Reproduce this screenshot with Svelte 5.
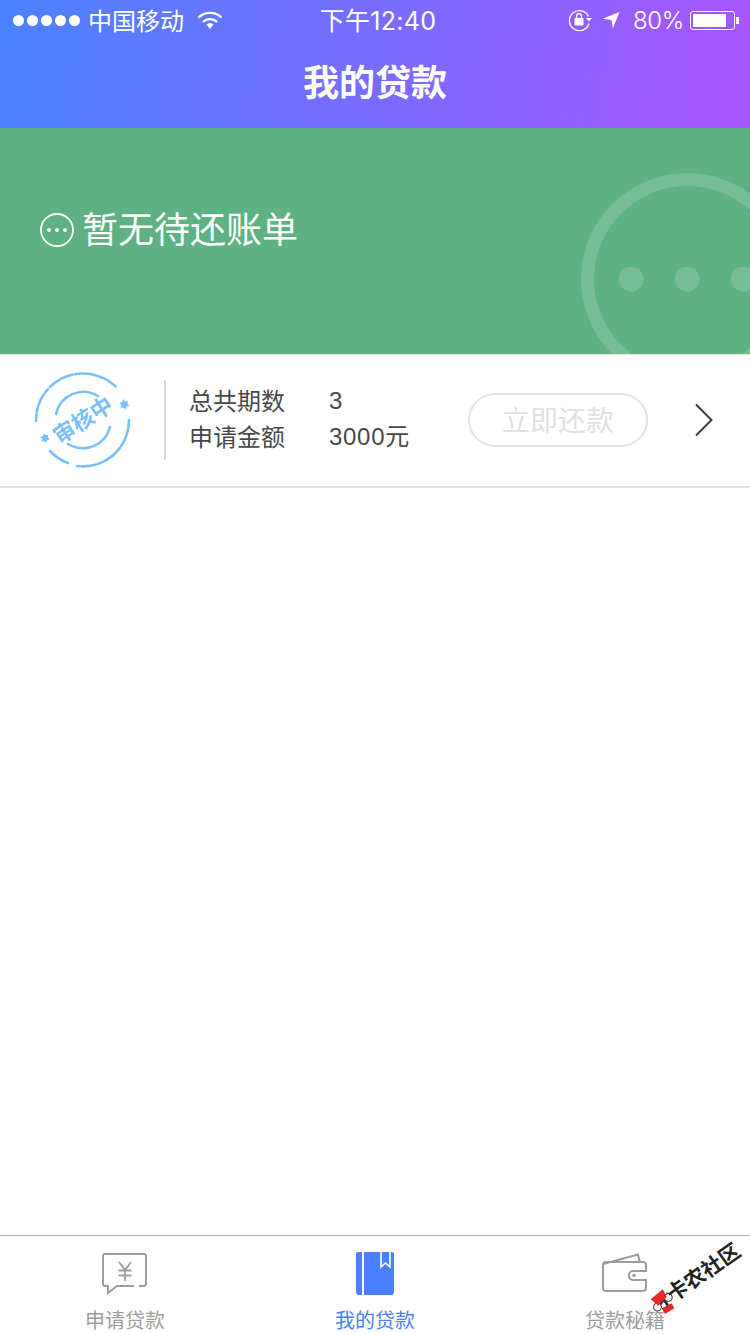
<script>
	const tabs = [
		{ key: "apply", label: "申请贷款" },
		{ key: "mine", label: "我的贷款", active: true },
		{ key: "tips", label: "贷款秘籍" }
	];
</script>

<div class="page">
	<header class="top">
		<div class="status">
			<div class="left">
				<span class="dots"><i></i><i></i><i></i><i></i><i></i></span>
				<span class="carrier">中国移动</span>
				<svg class="wifi" width="26" height="20" viewBox="0 0 26 20">
					<path d="M1.5 7.5a16.5 16.5 0 0 1 23 0" fill="none" stroke="#fff" stroke-width="2.4" />
					<path d="M6 12a10 10 0 0 1 14 0" fill="none" stroke="#fff" stroke-width="2.4" />
					<path d="M9.5 14.6a5.2 5.2 0 0 1 7 0L13 19z" fill="#fff" />
				</svg>
			</div>
			<div class="time">下午12:40</div>
			<div class="right">
				<svg width="24" height="22" viewBox="0 0 24 22">
					<path d="M21 14.5A10 10 0 1 1 20.5 7.5" fill="none" stroke="#fff" stroke-width="1.3" />
					<path d="M18 9h6l-3 3.4z" fill="#fff" />
					<rect x="6.5" y="9" width="9" height="7.5" rx="1" fill="#fff" />
					<path d="M8.5 9V7.2a2.5 2.5 0 0 1 5 0V9" fill="none" stroke="#fff" stroke-width="1.3" />
				</svg>
				<svg class="loc" width="18" height="18" viewBox="0 0 20 20">
					<path d="M0.5 8.5 19.5 1 12 19.5 10.5 10z" fill="#fff" />
				</svg>
				<span class="pct">80%</span>
				<span class="battery"><b></b></span>
			</div>
		</div>
		<h1>我的贷款</h1>
	</header>

	<section class="banner">
		<svg class="dots-icon" width="34" height="34" viewBox="0 0 34 34">
			<circle cx="17" cy="17" r="16" fill="none" stroke="#fff" stroke-width="1.8" />
			<circle cx="9" cy="17" r="1.9" fill="#fff" />
			<circle cx="17" cy="17" r="1.9" fill="#fff" />
			<circle cx="25" cy="17" r="1.9" fill="#fff" />
		</svg>
		<span>暂无待还账单</span>
		<svg class="ghost" width="212" height="212" viewBox="0 0 212 212">
			<circle cx="106" cy="106" r="99.5" fill="none" stroke="#77bc94" stroke-width="13" />
			<circle cx="50" cy="106" r="12.5" fill="#77bc94" />
			<circle cx="106" cy="106" r="12.5" fill="#77bc94" />
			<circle cx="162" cy="106" r="12.5" fill="#77bc94" />
		</svg>
	</section>

	<section class="loan">
		<svg class="stamp" width="100" height="100" viewBox="0 0 100 100">
			<g fill="none" stroke="#79c0fb" stroke-width="2.6" stroke-linecap="round">
				<path d="M3 51A47 47 0 0 1 84 18" stroke-dasharray="7 2 5 2.500 12 2 4 3 9 2 15 2.500 6 2 20 2" />
				<path d="M96 50A46 46 0 0 1 44 96" stroke-dasharray="16 2 9 2.500 20 2 6 2.500 14 2" />
				<path d="M35 93A46 46 0 0 1 17 81" />
				<path d="M23 44A28 28 0 0 1 65 26" />
				<path d="M77 57A28 28 0 0 1 35 74" stroke-dasharray="26 2 14 1.500" />
			</g>
			<path d="M90 29l2 2.4 3-.6-.6 3 2.2 2-3 .8-.8 3-2.2-2.2-3 .6.8-3-2-2.2 3-.8z" fill="#79c0fb" />
			<path d="M11 63l1.600 2.200 2.800-.4-.6 2.800 2 2-2.800.7-.7 2.800-2-2-2.800.6.7-2.800-2-2 2.800-.7z" fill="#79c0fb" />
			<text x="50" y="58" transform="rotate(-33 50 50)" text-anchor="middle" class="stamp-text">审核中</text>
		</svg>
		<div class="sep"></div>
		<dl class="info">
			<dt>总共期数</dt>
			<dd>3</dd>
			<dt>申请金额</dt>
			<dd>3000元</dd>
		</dl>
		<div class="pay">立即还款</div>
		<svg class="chev" width="20" height="34" viewBox="0 0 20 34">
			<path d="M2 1.5 17.5 17 2 32.500" fill="none" stroke="#3c3c3c" stroke-width="2" />
		</svg>
	</section>

	<main class="blank"></main>

	<nav class="tabs">
		{#each tabs as tab}
			<div class="tab" class:active={tab.active}>
				<div class="icon">
					{#if tab.key === "apply"}
						<svg width="48" height="44" viewBox="0 0 48 44">
							<path d="M38 34h5a2 2 0 0 0 2-2V4a2 2 0 0 0-2-2H4a2 2 0 0 0-2 2v28a2 2 0 0 0 2 2h3v7l9-7h17" fill="none" stroke="#9c9c9c" stroke-width="2" />
							<path d="M18 10l6 8 6-8M24 18v11M17.500 18.500h13M17.500 23.500h13" fill="none" stroke="#9c9c9c" stroke-width="1.800" />
						</svg>
					{:else if tab.key === "mine"}
						<svg width="38" height="44" viewBox="0 0 38 44">
							<path d="M2 0h34a2 2 0 0 1 2 2v38a3 3 0 0 1-3 3H3a3 3 0 0 1-3-3V2a2 2 0 0 1 2-2z" fill="#4a80ff" />
							<rect x="6" y="0" width="2" height="43" fill="#fff" />
							<path d="M25 0v15l4.500-4 4.500 4V0" fill="none" stroke="#fff" stroke-width="1.600" />
						</svg>
					{:else}
						<svg width="48" height="42" viewBox="0 0 48 42">
							<path d="M2 12 37 2.500l2 8.500" fill="none" stroke="#9c9c9c" stroke-width="2" />
							<rect x="2" y="10" width="43" height="29" rx="3" fill="none" stroke="#9c9c9c" stroke-width="2" />
							<path d="M46 19H32a4 4 0 0 0-4 4v1a4 4 0 0 0 4 4h14" fill="#fff" stroke="#9c9c9c" stroke-width="2" />
							<circle cx="33" cy="23.500" r="1.700" fill="#9c9c9c" />
						</svg>
					{/if}
				</div>
				<span>{tab.label}</span>
			</div>
		{/each}
	</nav>

	<div class="mark">
		<svg width="32" height="34" viewBox="0 0 32 34">
			<path d="M13 10 22 24M20 8 9 24" stroke="#222" stroke-width="2.500" fill="none" />
			<circle cx="20.300" cy="12.500" r="4" fill="#fff" stroke="#333" stroke-width="1" />
			<circle cx="9.500" cy="22" r="4" fill="#fff" stroke="#333" stroke-width="1" />
			<path d="M2.700 14.300 14.700 4.300l4 7.400-8.400 9z" fill="#e52a2a" />
			<path d="M13.700 23.300 23.700 18.300l2.600 5L17 29z" fill="#e52a2a" />
		</svg>
		<span>卡农社区</span>
	</div>
</div>

<style>
	:global(body) {
		margin: 0;
		background: #fff;
	}
	.page {
		position: relative;
		display: flex;
		flex-direction: column;
		width: 750px;
		height: 1334px;
		overflow: hidden;
		font-family: "Noto Sans CJK SC", "Liberation Sans", sans-serif;
		color: #3a3a3a;
	}
	.top {
		flex: none;
		height: 128px;
		background: linear-gradient(100deg, #4a82ff 0%, #a855ff 100%);
		color: #fff;
	}
	.status {
		display: grid;
		grid-template-columns: 1fr auto 1fr;
		align-items: center;
		height: 38px;
		font-size: 24px;
	}
	.left {
		display: flex;
		align-items: center;
		padding-left: 13px;
	}
	.dots {
		display: flex;
		gap: 3px;
		margin-top: 2px;
	}
	.dots i {
		width: 11px;
		height: 11px;
		border-radius: 50%;
		background: #fff;
	}
	.carrier {
		margin-left: 8px;
		font-weight: 400;
	}
	.wifi {
		margin-left: 13px;
		margin-top: 2px;
	}
	.time {
		font-family: "Inter", "Noto Sans CJK SC", sans-serif;
		font-size: 25px;
		font-weight: 400;
		letter-spacing: 0.3px;
		padding-left: 6px;
	}
	.right {
		display: flex;
		align-items: center;
		justify-content: flex-end;
		padding: 2px 15px 0 0;
	}
	.loc {
		margin-left: 10px;
	}
	.pct {
		margin-left: 13px;
		font-family: "Inter", sans-serif;
		font-weight: 300;
		letter-spacing: -0.3px;
	}
	.battery {
		position: relative;
		box-sizing: border-box;
		display: flex;
		width: 45px;
		height: 19px;
		margin-left: 6px;
		padding: 2px;
		border: 1px solid #fff;
		border-radius: 3px;
	}
	.battery b {
		width: 33px;
		background: #fff;
	}
	.battery::after {
		content: "";
		position: absolute;
		right: -5px;
		top: 5px;
		width: 3px;
		height: 7px;
		background: #fff;
	}
	h1 {
		margin: 0;
		text-align: center;
		font-size: 36px;
		font-weight: 700;
		line-height: 84px;
	}
	.banner {
		position: relative;
		flex: none;
		display: flex;
		align-items: center;
		gap: 8px;
		box-sizing: border-box;
		height: 226px;
		padding: 0 0 23px 40px;
		overflow: hidden;
		background: #5eb182;
		color: #fff;
		font-size: 36px;
		font-weight: 400;
	}
	.banner span {
		margin-bottom: 6px;
	}
	.ghost {
		position: absolute;
		left: 581px;
		top: 45px;
	}
	.loan {
		flex: none;
		display: flex;
		align-items: center;
		box-sizing: border-box;
		height: 134px;
		padding: 0 0 2px 33px;
		border-top: 1px solid #e6e6e6;
		border-bottom: 2px solid #e0e0e0;
	}
	.stamp {
		filter: blur(0.7px);
	}
	.stamp-text {
		fill: #79c0fb;
		font-size: 22px;
		font-weight: 700;
	}
	.sep {
		width: 2px;
		height: 80px;
		margin-left: 31px;
		background: #d8d8d8;
	}
	.info {
		display: grid;
		grid-template-columns: 139px 139px;
		margin: 0 1px 3px 23px;
		color: #484848;
		font-size: 24px;
		line-height: 36px;
		font-weight: 400;
	}
	.info dt {
		margin-right: -1px;
	}
	.info dd {
		margin: 0 0 0 1px;
		padding-top: 1px;
		line-height: 35px;
		font-family: "Liberation Sans", "Noto Sans CJK SC", sans-serif;
		letter-spacing: 0.7px;
	}
	.pay {
		box-sizing: border-box;
		width: 180px;
		height: 54px;
		border: 2px solid #e3e3e3;
		border-radius: 27px;
		color: #e0e0e0;
		font-size: 28px;
		font-weight: 400;
		line-height: 48px;
		text-align: center;
	}
	.chev {
		margin-left: 46px;
	}
	.blank {
		flex: 1;
	}
	.tabs {
		flex: none;
		display: grid;
		grid-template-columns: repeat(3, 1fr);
		height: 99px;
		border-top: 1px solid #b0b0b0;
		box-sizing: border-box;
	}
	.tab {
		display: flex;
		flex-direction: column;
		align-items: center;
		color: #9c9c9c;
		font-size: 20px;
		font-weight: 400;
	}
	.tab.active {
		color: #4a80ff;
	}
	.icon {
		display: flex;
		align-items: flex-start;
		height: 57px;
		padding-top: 16px;
		box-sizing: border-box;
		margin-bottom: 15px;
	}
	.tab span {
		line-height: 24px;
	}
	.mark {
		position: absolute;
		left: 648px;
		top: 1285px;
		width: 32px;
		height: 34px;
	}
	.mark span {
		position: absolute;
		left: 27px;
		top: -4px;
		color: #222;
		font-size: 21px;
		font-weight: 700;
		line-height: 24px;
		white-space: nowrap;
		transform: rotate(-35deg);
		transform-origin: 0 100%;
	}
</style>
